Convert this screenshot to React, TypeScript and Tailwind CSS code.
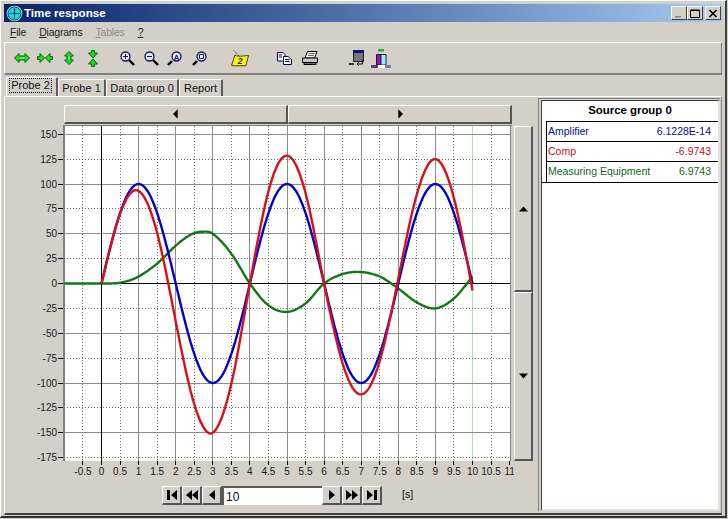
import React from "react";

const X = (t: number) => 101.5 + t * 37.1;
const Y = (v: number) => 283.5 - v * 0.995;
const sx = (t: number) => Math.floor(X(t)) + 0.5;
const sy = (v: number) => Math.floor(Y(v)) + 0.5;

const greenKeys: [number, number][] = [
  [0, 0], [0.4, 0.3], [0.7, 2.5], [1, 7], [1.5, 20], [2, 38], [2.4, 49], [2.7, 52], [3, 50], [3.5, 30],
  [4, 0], [4.5, -22], [5, -28.5], [5.5, -20], [6, 0], [6.5, 9.5], [7, 11.5], [7.5, 7], [8, -5], [8.5, -19],
  [9, -25], [9.5, -15], [10, 7],
];

function green(t: number) {
  const k = greenKeys;
  let i = 0;
  while (i < k.length - 2 && t > k[i + 1][0]) i++;
  const p0 = k[Math.max(i - 1, 0)], p1 = k[i], p2 = k[i + 1], p3 = k[Math.min(i + 2, k.length - 1)];
  const h = p2[0] - p1[0];
  const s = (t - p1[0]) / h;
  const m1 = ((p2[1] - p0[1]) / (p2[0] - p0[0])) * h;
  const m2 = ((p3[1] - p1[1]) / (p3[0] - p1[0])) * h;
  const s2 = s * s, s3 = s2 * s;
  return (2 * s3 - 3 * s2 + 1) * p1[1] + (s3 - 2 * s2 + s) * m1 + (-2 * s3 + 3 * s2) * p2[1] + (s3 - s2) * m2;
}
const blue = (t: number) => 100 * Math.sin((Math.PI / 2) * t);
const red = (t: number) => blue(t) - green(t);

function curve(f: (t: number) => number) {
  const pts: string[] = [];
  for (let i = 0; i <= 300; i++) {
    const t = (10 * i) / 300;
    pts.push(`${X(t).toFixed(1)},${Y(f(t)).toFixed(1)}`);
  }
  return pts.join(" ");
}

const labelFont = "'Liberation Sans', sans-serif";

function Chart() {
  const ticks: number[] = [];
  for (let i = -1; i <= 22; i++) ticks.push(i / 2);
  const ys: number[] = [];
  for (let v = 150; v >= -175; v -= 25) ys.push(v);
  return (
    <svg width="509" height="354" viewBox="5 125 509 354" className="block shrink-0">
      <rect x="64" y="126" width="447" height="335" fill="#ffffff" />
      {ticks.map((t) =>
        Number.isInteger(t) ? (
          t === 0 || t === 11 ? null : (
            <line key={t} x1={sx(t)} x2={sx(t)} y1="126" y2="461" stroke={t === 10 ? "#a4eca4" : "#8c8c8c"} />
          )
        ) : (
          <line key={t} x1={sx(t)} x2={sx(t)} y1="126" y2="461" stroke="#707070" strokeDasharray="1 2" />
        )
      )}
      {ys.map((v) =>
        v === 0 ? null : v % 50 === 0 ? (
          <line key={v} x1="64" x2="511" y1={sy(v)} y2={sy(v)} stroke="#8c8c8c" />
        ) : (
          <line key={v} x1="64" x2="511" y1={sy(v)} y2={sy(v)} stroke="#707070" strokeDasharray="1 2" />
        )
      )}
      <line x1="64" x2="511" y1={sy(0)} y2={sy(0)} stroke="#000000" />
      <line x1={sx(0)} x2={sx(0)} y1="126" y2="461" stroke="#000000" />
      <line x1="64" x2="64" y1="125" y2="461" stroke="#808080" strokeWidth="2" />
      <line x1="510.5" x2="510.5" y1="126" y2="461" stroke="#808080" />
      <line x1="63" x2="512" y1="125.5" y2="125.5" stroke="#808080" />
      <polyline points={`${X(-1)},${Y(0)} ${X(0)},${Y(0)}`} fill="none" stroke="#0f7a14" strokeWidth="2.4" />
      <polyline points={curve(green)} fill="none" stroke="#0f7a14" strokeWidth="2.4" />
      <polyline points={curve(blue)} fill="none" stroke="#0000d0" strokeWidth="2.4" />
      <polyline points={curve(red)} fill="none" stroke="#d8101c" strokeWidth="2.4" />
      {ticks.map((t) => (
        <g key={t}>
          <line x1={sx(t)} x2={sx(t)} y1="461" y2="465" stroke="#000000" />
          <text x={X(t)} y="475" textAnchor="middle" fontSize="10" fill="#1a1a1a" fontFamily={labelFont}>
            {String(t)}
          </text>
        </g>
      ))}
      {ys.map((v) => (
        <g key={v}>
          <line x1="58" x2="63" y1={sy(v)} y2={sy(v)} stroke="#000000" />
          <text x="57" y={Y(v) + 3.5} textAnchor="end" fontSize="10" fill="#1a1a1a" fontFamily={labelFont}>
            {v}
          </text>
        </g>
      ))}
    </svg>
  );
}

const raised = "bg-[#d4d0c8] border-t border-l border-t-white border-l-white border-r-2 border-b-2 border-r-[#555555] border-b-[#555555]";

const LEFT = "M9 1.5 L3.5 7 L9 12.5Z";
const RIGHT = "M5 1.5 L10.5 7 L5 12.5Z";
const nav: Record<string, string> = {
  first: "M2 2H5V12H2Z M12 2 L6 7 L12 12Z",
  back2: "M7 2 L1 7 L7 12Z M13 2 L7 7 L13 12Z",
  back: "M10 2 L4 7 L10 12Z",
  fwd: "M4 2 L10 7 L4 12Z",
  fwd2: "M1 2 L7 7 L1 12Z M7 2 L13 7 L7 12Z",
  last: "M2 2 L8 7 L2 12Z M9 2H12V12H9Z",
};

function Glyph({ d, size = 14 }: { d: string; size?: number }) {
  return (
    <svg width={size} height={size} viewBox="0 0 14 14" className="block">
      <path d={d} fill="#000" />
    </svg>
  );
}

function NavBtn({ d }: { d: string }) {
  return (
    <div className={`w-[20px] h-[19px] flex items-center justify-center ${raised}`}>
      <Glyph d={d} />
    </div>
  );
}

const g = "#12e212";
const gs = "#0a5f18";

function Mag({ className = "", children, flip = false }: { className?: string; children?: React.ReactNode; flip?: boolean }) {
  return (
    <svg width="15" height="15" viewBox="0 0 15 15" className={`shrink-0 ${className}`}>
      {flip ? (
        <path d="M5 10 L1 14" stroke="#000" strokeWidth="2.4" />
      ) : (
        <path d="M9 9 L14 14" stroke="#000" strokeWidth="2.4" />
      )}
      <g transform={flip ? "translate(4,0)" : "translate(0,0)"}>
        <circle cx="5.5" cy="5.5" r="4.5" fill="#e6e6f6" stroke="#12126e" strokeWidth="1.3" />
        {children}
      </g>
    </svg>
  );
}

function Icons() {
  return (
    <div className="flex items-center h-full ml-[9px]">
      <svg width="16" height="10" viewBox="0 0 16 10" className="shrink-0">
        <path d="M0.5 5 L5 0.5 V3 H11 V0.5 L15.5 5 L11 9.5 V7 H5 V9.5Z" fill={g} stroke={gs} />
        <path d="M5.5 4.5H10.5V5.5H5.5Z" fill="#d0f0c8" />
      </svg>
      <svg width="16" height="10" viewBox="0 0 16 10" className="ml-[7px] shrink-0">
        <path d="M0.5 3.5 H3 V0.5 L7.5 5 L3 9.5 V6.5 H0.5Z M15.5 3.5 H13 V0.5 L8.5 5 L13 9.5 V6.5 H15.5Z" fill={g} stroke={gs} />
      </svg>
      <svg width="10" height="14" viewBox="0 0 10 14" className="ml-[11px] shrink-0">
        <path d="M5 0.5 L9.5 5 H7 V9 H9.5 L5 13.5 L0.5 9 H3 V5 H0.5Z" fill={g} stroke={gs} />
        <path d="M4.5 5.5H5.5V8.5H4.5Z" fill="#d0f0c8" />
      </svg>
      <svg width="10" height="17" viewBox="0 0 10 17" className="ml-[14px] shrink-0">
        <path d="M3.5 0.5 H6.5 V3 H9.5 L5 8 L0.5 3 H3.5Z M3.5 16.5 H6.5 V14 H9.5 L5 9 L0.5 14 H3.5Z" fill={g} stroke={gs} />
      </svg>
      <Mag className="ml-[22px]"><path d="M3 5.5H8M5.5 3V8" stroke="#12126e" /></Mag>
      <Mag className="ml-[9px]"><path d="M3 5.5H8" stroke="#12126e" /></Mag>
      <Mag className="ml-[8px]" flip><text x="5.5" y="8.5" fontSize="7.5" fontWeight="bold" textAnchor="middle" fill="#12126e" fontFamily={labelFont}>A</text></Mag>
      <Mag className="ml-[10px]" flip><path d="M3.5 3.5H7.5V7.5H3.5Z" fill="#fff" stroke="#12126e" /></Mag>
      <svg width="18" height="17" viewBox="0 0 18 17" className="ml-[24px] shrink-0">
        <path d="M3 0.5 L8 6" stroke="#222" strokeDasharray="1 1" />
        <path d="M4 5 C7 7 11 6 17.5 5.5 L15 15.5 H0.5Z" fill="#f8f020" stroke="#4a4a10" />
        <path d="M1 16H15" stroke="#8a8a20" />
        <text x="9" y="14" fontSize="8.5" fontWeight="bold" fontStyle="italic" textAnchor="middle" fill="#303000" fontFamily={labelFont}>2</text>
      </svg>
      <svg width="15" height="13" viewBox="0 0 15 13" className="ml-[28px] shrink-0">
        <path d="M0.5 0.5H6L8 2.5V9H0.5Z" fill="#fff" stroke="#000050" />
        <path d="M6.5 4.5H11L14.5 7.5V12.5H6.5Z" fill="#fff" stroke="#000050" />
        <path d="M8 7.5H12.5M8 9.5H12.5M2 3H5M2 5H5" stroke="#000050" />
      </svg>
      <svg width="16" height="14" viewBox="0 0 16 14" className="ml-[10px] shrink-0">
        <path d="M5.5 0.5H15L12.5 7H3Z" fill="#fff" stroke="#000" />
        <path d="M0.5 7H15.5V11.5H0.5Z" fill="#c4c4c4" stroke="#000" />
        <path d="M2 11.5H14V13.5H2Z" fill="#707070" stroke="#000" />
        <path d="M6.5 2.5H13M6 4.5H12" stroke="#606060" />
      </svg>
      <svg width="15" height="16" viewBox="0 0 15 16" className="ml-[31px] shrink-0">
        <path d="M4.5 0.5H14.5V11.5H4.5Z" fill="#767676" stroke="#202020" />
        <path d="M4 0H15V3H4Z" fill="#14147a" />
        <path d="M0 13H5V15H0Z" fill="#303030" />
        <path d="M13.5 10V14H8M10 12L8 14L10 16" stroke="#000" fill="none" />
      </svg>
      <svg width="20" height="19" viewBox="0 0 20 19" className="ml-[7px] shrink-0">
        <path d="M7 0H13V2.5H7Z" fill="#20b030" />
        <path d="M5.5 5.5H10V16H5.5Z" fill="#a814a8" stroke="#300040" />
        <path d="M10 5.5H15V16H10Z" fill="#98ecf4" stroke="#203040" />
        <path d="M0 16H7V19H0Z" fill="#5a3a8a" />
        <path d="M7 16H14V19H7Z" fill="#ffffff" />
        <path d="M14 16H20V19H14Z" fill="#80808c" />
      </svg>
    </div>
  );
}

function Tab({ label, active = false, w }: { label: string; active?: boolean; w: string }) {
  return (
    <div className={`${w} ${active ? "h-[19px] pb-[3px] pr-[2px]" : "h-[17px]"} bg-[#d4d0c8] border-t border-l border-r-2 border-t-white border-l-white border-r-[#5a5a5a] rounded-t-[2px] flex items-center justify-center`}>
      <span className={active ? "outline-1 outline-dotted outline-black px-[1px] leading-[13px]" : "leading-[13px]"}>{label}</span>
    </div>
  );
}

function Row({ name, value, color, last = false }: { name: string; value: string; color: string; last?: boolean }) {
  return (
    <div className={`h-[20px] flex items-center justify-between pl-px pr-[7px] ${last ? "" : "border-b border-black"} ${color}`}>
      <span>{name}</span>
      <span>{value}</span>
    </div>
  );
}

export default function App() {
  return (
    <div className="w-[728px] h-[519px] bg-[#d4d0c8] overflow-hidden text-[11px] text-[#111111]" style={{ fontFamily: "'Liberation Sans', Arial, sans-serif" }}>
      <div className="w-[727px] h-[518px] border-t border-l border-t-white border-l-white border-r-2 border-b-2 border-r-[#404040] border-b-[#303030] px-[3px] pt-[3px] pb-px flex flex-col">
        {/* title bar */}
        <div className="h-[18px] flex items-center shrink-0 pl-[2px] pr-[1px] bg-gradient-to-r from-[#0a246a] to-[#a6caf0]">
          <svg width="17" height="17" viewBox="0 0 17 17" className="shrink-0">
            <circle cx="8.5" cy="8.5" r="7.8" fill="#d8f0e0" />
            <circle cx="8.5" cy="8.5" r="6.6" fill="#18d4e4" stroke="#0a4060" strokeWidth="1" />
            <path d="M8.5 3V14M3 8.5H14" stroke="#0a6a80" strokeWidth="1" />
            <path d="M8.5 4V8.5H12" stroke="#003048" strokeWidth="1.2" fill="none" />
          </svg>
          <span className="ml-px text-white font-bold text-[11.6px]">Time response</span>
          <div className="ml-auto flex">
            {["min", "max", "close"].map((k) => (
              <div key={k} className={`w-[16px] h-[14px] ${k === "close" ? "ml-[2px]" : ""} bg-[#d4d0c8] border-t border-l border-t-white border-l-white border-r border-b border-r-[#404040] border-b-[#404040] flex items-center justify-center`}>
                <svg width="10" height="9" viewBox="0 0 10 9">
                  {k === "min" && <path d="M1 7H7V8.5H1Z" fill="#888" />}
                  {k === "max" && <path d="M0.5 1.5H9.5V8.5H0.5Z M0.5 1H9.5" fill="none" stroke="#000" />}
                  {k === "close" && <path d="M1.5 1L8.5 8M8.5 1L1.5 8" stroke="#000" strokeWidth="1.6" />}
                </svg>
              </div>
            ))}
          </div>
        </div>
        {/* menu */}
        <div className="h-[20px] flex items-center shrink-0 pl-[6px] pt-[1px] gap-[13px] text-[10.5px] tracking-[-0.2px] text-[#222]">
          <span><u>F</u>ile</span>
          <span><u>D</u>iagrams</span>
          <span className="text-[#8f8d88]"><u>T</u>ables</span>
          <span><u>?</u></span>
        </div>
        {/* toolbar */}
        <div className="h-[33px] shrink-0 border-t border-t-white border-b-2 border-b-[#808080] border-l border-l-white border-r border-r-[#808080] flex items-center">
          <Icons />
        </div>
        {/* tabs */}
        <div className="h-[19px] shrink-0 flex items-end pl-[2px] mt-[2px] relative z-10">
          <Tab label="Probe 2" active w="w-[52px]" />
          <Tab label="Probe 1" w="w-[48px]" />
          <Tab label="Data group 0" w="w-[73px]" />
          <Tab label="Report" w="w-[44px]" />
        </div>
        {/* page */}
        <div className="flex-1 min-h-0 border-t border-t-white border-l border-l-white border-r border-r-[#808080] border-b-2 border-b-[#404040] flex">
          {/* left column */}
          <div className="w-[533px] shrink-0 flex flex-col">
            <div className="h-[19px] mt-[8px] ml-[59px] w-[448px] flex shrink-0">
              <div className={`w-[224px] flex items-center justify-center ${raised}`}>
                <Glyph d={LEFT} size={12} />
              </div>
              <div className={`w-[224px] flex items-center justify-center ${raised}`}>
                <Glyph d={RIGHT} size={12} />
              </div>
            </div>
            <div className="mt-px flex items-start">
              <Chart />
              <div className="mt-px w-[19px] flex flex-col shrink-0">
                <div className={`h-[166px] flex items-center justify-center ${raised}`}>
                  <svg width="9" height="6" viewBox="0 0 9 6"><path d="M4.5 0.5L9 5.5H0Z" fill="#000" /></svg>
                </div>
                <div className={`h-[169px] flex items-center justify-center ${raised}`}>
                  <svg width="9" height="6" viewBox="0 0 9 6"><path d="M4.5 5.5L9 0.5H0Z" fill="#000" /></svg>
                </div>
              </div>
            </div>
            <div className="mt-[7px] pl-[157px] flex items-start">
              <NavBtn d={nav.first} />
              <NavBtn d={nav.back2} />
              <NavBtn d={nav.back} />
              <div className="w-[100px] h-[19px] bg-white border-t-2 border-l-2 border-t-[#5a5a5a] border-l-[#5a5a5a] flex items-center pl-[2px] text-[12px]">10</div>
              <NavBtn d={nav.fwd} />
              <NavBtn d={nav.fwd2} />
              <NavBtn d={nav.last} />
              <span className="ml-[20px] mt-px text-[10.5px]">[s]</span>
            </div>
          </div>
          {/* right panel */}
          <div className="flex-1 mt-px mb-[2px] mr-px border-t border-l border-t-[#808080] border-l-[#808080] pl-[2px] pt-px flex">
            <div className="flex-1 bg-white border-t border-l border-t-[#404040] border-l-[#404040] border-r-2 border-b-2 border-r-[#e4e2dc] border-b-[#e4e2dc]">
              <div className="h-[20px] flex items-center justify-center font-bold text-[11.4px] text-black">Source group 0</div>
              <div className="ml-[4px] border-l border-t border-black text-[10.5px]">
                <Row name="Amplifier" value="6.1228E-14" color="text-[#0a0a9a]" />
                <Row name="Comp" value="-6.9743" color="text-[#c01020]" />
                <Row name="Measuring Equipment" value="6.9743" color="text-[#0a6a14]" last />
              </div>
              <div className="h-px bg-black" />
            </div>
          </div>
        </div>
      </div>
    </div>
  );
}
